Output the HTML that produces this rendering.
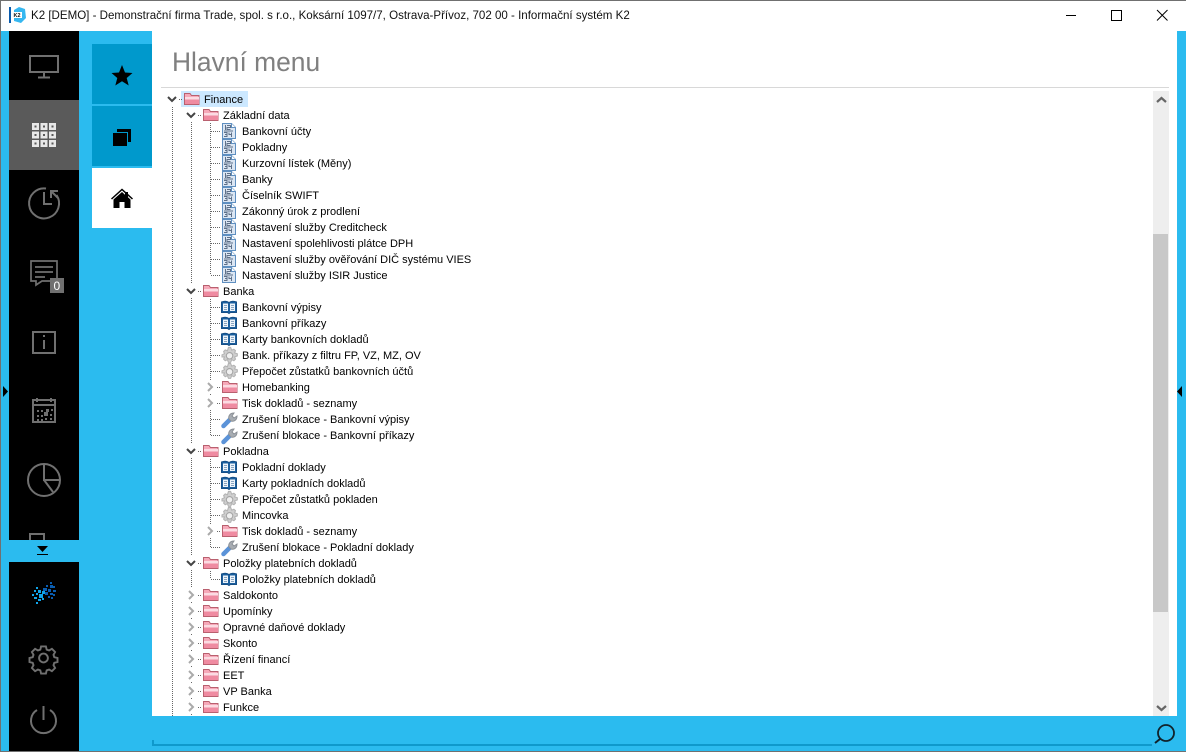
<!DOCTYPE html>
<html lang="cs"><head><meta charset="utf-8"><title>K2</title>
<style>
html,body{margin:0;padding:0;background:#fff}
#w{position:relative;width:1186px;height:752px;overflow:hidden;background:#2bbbef;font-family:"Liberation Sans",sans-serif}
#w>div{position:absolute}
.t{left:0;margin-top:1px;font-size:11px;line-height:16px;height:16px;color:#000;white-space:nowrap}
.a{left:204px}.b{left:223px}.c{left:242px}
svg{position:absolute;left:0;top:0}
</style></head><body><div id="w">
<div style="left:0;top:0;width:1186px;height:31px;background:#fff"></div>
<div style="left:9px;top:31px;width:70px;height:720px;background:#000"></div>
<div style="left:9px;top:100px;width:70px;height:70px;background:#5a5a5a"></div>
<div style="left:9px;top:540px;width:70px;height:22px;background:#2bbbef"></div>
<div style="left:92px;top:44px;width:60px;height:60px;background:#0099cc"></div>
<div style="left:92px;top:106px;width:60px;height:60px;background:#0099cc"></div>
<div style="left:92px;top:168px;width:60px;height:60px;background:#fff"></div>
<div style="left:152px;top:31px;width:1025px;height:685px;background:#fff"></div>
<div style="left:161px;top:87px;width:1008px;height:1px;background:#d8d8d8"></div>
<div style="left:1153px;top:91px;width:16px;height:625px;background:#eee"></div>
<div style="left:1153px;top:234px;width:15px;height:378px;background:#c8c8c8"></div>
<div style="left:181px;top:91px;width:67px;height:16px;background:#cce8ff"></div>
<div style="left:152px;top:744px;width:1000px;height:2px;background:#0f99cc"></div>
<div style="left:152px;top:740px;width:2px;height:6px;background:#0f99cc"></div>

<svg width="1186" height="752" viewBox="0 0 1186 752" fill="none">
<defs>
<g id="f"><path d="M.5 11.500V.5h5.500l1.500 2h7.500v9z" fill="#f6a9b9" stroke="#b9606f"/><path d="M1 4h14v2.500H1z" fill="#fbdbe2"/><path d="M1 6.500h14V11H1z" fill="#ef8ba1"/></g>
<g id="n"><path d="M.5.5h9l4 4v11H.5z" fill="#dbe6f3" stroke="#5f8fc0"/><path d="M9.500.5v4h4" fill="#fff" stroke="#5f8fc0"/><g stroke="#5e7088" shape-rendering="crispEdges"><path d="M3.500 2v5M5 2.500h3.500v2H5v2h3.500M2 8h9M2 9.500h3v2H3M2 13.500h3V11.500M7 9.500v2h3M9.500 9.500v4.500"/></g></g>
<g id="k"><path d="M.5 1C3 0 6 0 8 1.500c2-1.500 5-1.500 7.500-.5v10.500h-6l-1.500 1-1.500-1h-6z" fill="#1b5f9e" stroke="#174f86"/><path d="M2 2.500h5v7.500H2zM9 2.500h5v7.500H9z" fill="#eef4fa"/><path d="M3 4.500h3M3 6.500h3M3 8.500h3M10 4.500h3M10 6.500h3M10 8.500h3" stroke="#88a4c0"/></g>
<g id="g"><g transform="scale(1.080)"><path d="M8-.5l1 2.500 2-.8 1.500 1.300-.8 2 2.500.8v2l-2.500 1 .8 2-1.500 1.500-2-1-1 2.500H6l-1-2.500-2 1-1.500-1.500.8-2L0 8.300v-2l2.300-1-.8-2L3 1.800l2 .8L6-.5z" fill="#cfcfcf" stroke="#b4b4b4"/><circle cx="7" cy="7.200" r="3" fill="#f0f0f0" stroke="#a5a5a5"/></g></g>
<g id="r"><path d="M2.500 14l7-7" stroke="#5b93d8" stroke-width="4.500" stroke-linecap="round"/><path d="M8 7c-1-3 1-6 5-6l-2 3 2 2 3-2c0 4-3 6-6 5z" fill="#a8adb3" stroke="#8b9096"/></g>
<path id="e" d="M0 0l4 4 4-4" stroke="#444" stroke-width="2"/>
<path id="c" d="M0 0l4 4-4 4" stroke="#aaa" stroke-width="2"/>
</defs>

<!-- window frame -->
<path d="M0 .5h1186M.5 0v752M0 751.500h1186" stroke="#707070"/>
<!-- title icon -->
<rect x="9" y="7" width="2" height="16" fill="#0b5cad"/>
<path d="M14 10l5-3 6 2 1 9-5 5-7-2z" fill="#36b7f0"/><rect x="13" y="12" width="9" height="6" fill="#fff"/><text x="13.500" y="17" font-size="5.500" font-weight="bold" fill="#111" font-family="Liberation Sans">K2</text>
<!-- window controls -->
<path d="M1066 15.500h10" stroke="#000"/>
<rect x="1111.500" y="10.500" width="10" height="10" stroke="#000"/>
<path d="M1157 10l10.500 10.500M1167.500 10L1157 20.500" stroke="#000"/>

<!-- sidebar icons -->
<g stroke="#707070" stroke-width="2">
<rect x="30" y="56" width="28" height="16"/><path d="M44 73v4M38 77.500h12"/>
<path d="M46 188.500A15 15 0 1 0 56.500 195M44 192v12h8M51 198v-7h7M51 191l7 7"/>
<path d="M31 261h26v20H42l-6 4v-4h-5zM35 267h18M35 272h18M35 277h10" stroke-width="1.700"/>
<rect x="33" y="332" width="22" height="21"/><path d="M44 340v9M44 335v2"/>
<rect x="33" y="400" width="22" height="22"/><path d="M33 405h22M37 398v4M51 398v4"/>
<circle cx="44" cy="480" r="16"/><path d="M44 464v16h16M44 480l9 12"/>
<path d="M30 540v-6h14v6"/>
<g transform="translate(43.500 658) scale(.8)"><path d="M-3-14h6l1 4 3 1 3.500-2 4 4-2 3.500 1 3 4 1v5l-4 1-1 3 2 3.500-4 4-3.500-2-3 1-1 4h-6l-1-4-3-1-3.500 2-4-4 2-3.500-1-3-4-1v-5l4-1 1-3-2-3.500 4-4 3.500 2 3-1z" transform="translate(0 -.5)" stroke-width="2.400"/><circle r="5.500" stroke-width="2.400"/></g>
<path d="M43.500 706v14M37 710a12.500 12.500 0 1 0 13 0"/>
</g>
<g id="grid" fill="#e8e8e8">
<path fill-rule="evenodd" d="M32 123h7v7h-7zM40.500 123h7v7h-7zM49 123h7v7h-7zM32 131.500h7v7h-7zM40.500 131.500h7v7h-7zM49 131.500h7v7h-7zM32 140h7v7h-7zM40.500 140h7v7h-7zM49 140h7v7h-7zM34.500 125.500v2h2v-2zM43 125.500v2h2v-2zM51.500 125.500v2h2v-2zM34.500 134v2h2v-2zM43 134v2h2v-2zM51.500 134v2h2v-2zM34.500 142.500v2h2v-2zM43 142.500v2h2v-2zM51.500 142.500v2h2v-2z"/>
</g>
<path d="M37 410h2v2h-2zM41 410h2v2h-2zM46 409h3v3h-3zM51 409h2v2h-2zM37 415h2v2h-2zM41 415h2v2h-2zM44 412h4v4h-4zM50 414h2v2h-2zM45 418h2v2h-2zM50 418h2v2h-2zM37 419h2v2h-2zM41 419h2v2h-2z" fill="#707070"/>
<rect x="50" y="278" width="14" height="15" fill="#707070"/>
<text x="53.500" y="290" font-size="12" fill="#fff" font-family="Liberation Sans">0</text>
<path d="M37 546h11l-5.500 6z" fill="#000"/><path d="M37 554.500h11" stroke="#000"/>
<!-- K2 pixels -->
<g fill="#0a5db0"><path d="M50 582h2v2h-2zM46 585h2v2h-2zM50 585h3v3h-3zM53 586h2v2h-2zM43 588h4v3h-4zM48 589h3v3h-3zM53 590h3v2h-3zM45 592h3v3h-3zM50 593h3v2h-3zM53 594h2v2h-2zM48 596h2v2h-2zM51 597h2v2h-2z"/></g>
<g fill="#10a5ea"><path d="M36 587h2v2h-2zM34 590h2v2h-2zM38 590h3v3h-3zM42 591h3v3h-3zM32 594h2v2h-2zM36 593h2v2h-2zM39 594h4v4h-4zM34 597h3v2h-3zM38 599h3v2h-3zM42 598h2v2h-2zM36 602h2v2h-2z"/></g>
<!-- side arrows -->
<path d="M3 386l5 5.500-5 5.500z" fill="#000"/><path d="M1182 386l-5 5.500 5 5.500z" fill="#000"/>
<!-- tab icons -->
<path d="M122 65l3 7.500 7.500.5-5.800 5 2 7.500-6.700-4.300-6.700 4.300 2-7.500-5.800-5 7.500-.5z" fill="#000"/>
<path d="M113 133h14v13h-14z" fill="#000"/><path d="M117 129h14v13h-3v-10h-11z" fill="#000"/>
<path d="M122 192l-8.500 7.500V208h6v-6h5v6h6v-8.500l-2.500-2.200V192h-3v2.700z" fill="#000"/><path d="M111.500 199l10.500-9.500 10.500 9.500" stroke="#000" stroke-width="1.500"/>
<!-- search -->
<circle cx="1166" cy="733" r="8" stroke="#11232b" stroke-width="1.800"/><path d="M1160 739l-5 4" stroke="#11232b" stroke-width="2"/>
<!-- scroll arrows -->
<path d="M1157 102l4.500-4 4.500 4" stroke="#666" stroke-width="2.200"/>
<path d="M1157 706l4.500 4 4.500-4" stroke="#666" stroke-width="2.200"/>

<!-- dotted lines -->
<g stroke="#666" stroke-dasharray="1 1" shape-rendering="crispEdges">
<path d="M172.500 107V716M191.500 122V284M191.500 298V444M191.500 458V556M191.500 570V588M191.500 602V604M191.500 618V620M191.500 634V636M191.500 650V652M191.500 666V668M191.500 682V684M191.500 698V700M191.500 714V716"/>
<path d="M210.500 123V275M210.500 299V380M210.500 394V396M210.500 410V435M210.500 459V524M210.500 538V547M210.500 571V579"/>
<path d="M179 99.500h4M198 115.500h4M198 291.500h4M198 451.500h4M198 563.500h4M198 595.500h4M198 611.500h4M198 627.500h4M198 643.500h4M198 659.500h4M198 675.500h4M198 691.500h4M198 707.500h4"/>
<path d="M211 131.500h10M211 147.500h10M211 163.500h10M211 179.500h10M211 195.500h10M211 211.500h10M211 227.500h10M211 243.500h10M211 259.500h10M211 275.500h10M211 307.500h10M211 323.500h10M211 339.500h10M211 355.500h10M211 371.500h10M217 387.500h4M217 403.500h4M211 419.500h10M211 435.500h10M211 467.500h10M211 483.500h10M211 499.500h10M211 515.500h10M217 531.500h4M211 547.500h10M211 579.500h10"/>
</g>
<!-- chevrons -->
<use href="#e" x="168" y="97"/><use href="#e" x="187" y="113"/><use href="#e" x="187" y="289"/><use href="#e" x="187" y="449"/><use href="#e" x="187" y="561"/>
<use href="#c" x="189" y="591"/><use href="#c" x="189" y="607"/><use href="#c" x="189" y="623"/><use href="#c" x="189" y="639"/><use href="#c" x="189" y="655"/><use href="#c" x="189" y="671"/><use href="#c" x="189" y="687"/><use href="#c" x="189" y="703"/>
<use href="#c" x="208" y="383"/><use href="#c" x="208" y="399"/><use href="#c" x="208" y="527"/>
<!-- folders -->
<use href="#f" x="184" y="93"/><use href="#f" x="203" y="109"/><use href="#f" x="203" y="285"/><use href="#f" x="203" y="445"/><use href="#f" x="203" y="557"/><use href="#f" x="203" y="589"/><use href="#f" x="203" y="605"/><use href="#f" x="203" y="621"/><use href="#f" x="203" y="637"/><use href="#f" x="203" y="653"/><use href="#f" x="203" y="669"/><use href="#f" x="203" y="685"/><use href="#f" x="203" y="701"/><use href="#f" x="222" y="381"/><use href="#f" x="222" y="397"/><use href="#f" x="222" y="525"/>
<!-- number pages -->
<use href="#n" x="222" y="123"/><use href="#n" x="222" y="139"/><use href="#n" x="222" y="155"/><use href="#n" x="222" y="171"/><use href="#n" x="222" y="187"/><use href="#n" x="222" y="203"/><use href="#n" x="222" y="219"/><use href="#n" x="222" y="235"/><use href="#n" x="222" y="251"/><use href="#n" x="222" y="267"/>
<!-- books -->
<use href="#k" x="221" y="301"/><use href="#k" x="221" y="317"/><use href="#k" x="221" y="333"/><use href="#k" x="221" y="461"/><use href="#k" x="221" y="477"/><use href="#k" x="221" y="573"/>
<!-- gears -->
<use href="#g" x="222" y="348"/><use href="#g" x="222" y="364"/><use href="#g" x="222" y="492"/><use href="#g" x="222" y="508"/>
<!-- wrenches -->
<use href="#r" x="221" y="412"/><use href="#r" x="221" y="428"/><use href="#r" x="221" y="540"/>
</svg>

<div style="left:31px;top:8px;font-size:11.56px;line-height:16px;color:#111;white-space:nowrap">K2 [DEMO] - Demonstrační firma Trade, spol. s r.o., Koksární 1097/7, Ostrava-Přívoz, 702 00 - Informační systém K2</div>
<div style="left:172px;top:46px;font-size:26.4px;line-height:32px;color:#808080;white-space:nowrap">Hlavní menu</div>

<div class="t a" style="top:91px">Finance</div>
<div class="t b" style="top:107px">Základní data</div>
<div class="t c" style="top:123px">Bankovní účty</div>
<div class="t c" style="top:139px">Pokladny</div>
<div class="t c" style="top:155px">Kurzovní lístek (Měny)</div>
<div class="t c" style="top:171px">Banky</div>
<div class="t c" style="top:187px">Číselník SWIFT</div>
<div class="t c" style="top:203px">Zákonný úrok z prodlení</div>
<div class="t c" style="top:219px">Nastavení služby Creditcheck</div>
<div class="t c" style="top:235px">Nastavení spolehlivosti plátce DPH</div>
<div class="t c" style="top:251px">Nastavení služby ověřování DIČ systému VIES</div>
<div class="t c" style="top:267px">Nastavení služby ISIR Justice</div>
<div class="t b" style="top:283px">Banka</div>
<div class="t c" style="top:299px">Bankovní výpisy</div>
<div class="t c" style="top:315px">Bankovní příkazy</div>
<div class="t c" style="top:331px">Karty bankovních dokladů</div>
<div class="t c" style="top:347px">Bank. příkazy z filtru FP, VZ, MZ, OV</div>
<div class="t c" style="top:363px">Přepočet zůstatků bankovních účtů</div>
<div class="t c" style="top:379px">Homebanking</div>
<div class="t c" style="top:395px">Tisk dokladů - seznamy</div>
<div class="t c" style="top:411px">Zrušení blokace - Bankovní výpisy</div>
<div class="t c" style="top:427px">Zrušení blokace - Bankovní příkazy</div>
<div class="t b" style="top:443px">Pokladna</div>
<div class="t c" style="top:459px">Pokladní doklady</div>
<div class="t c" style="top:475px">Karty pokladních dokladů</div>
<div class="t c" style="top:491px">Přepočet zůstatků pokladen</div>
<div class="t c" style="top:507px">Mincovka</div>
<div class="t c" style="top:523px">Tisk dokladů - seznamy</div>
<div class="t c" style="top:539px">Zrušení blokace - Pokladní doklady</div>
<div class="t b" style="top:555px">Položky platebních dokladů</div>
<div class="t c" style="top:571px">Položky platebních dokladů</div>
<div class="t b" style="top:587px">Saldokonto</div>
<div class="t b" style="top:603px">Upomínky</div>
<div class="t b" style="top:619px">Opravné daňové doklady</div>
<div class="t b" style="top:635px">Skonto</div>
<div class="t b" style="top:651px">Řízení financí</div>
<div class="t b" style="top:667px">EET</div>
<div class="t b" style="top:683px">VP Banka</div>
<div class="t b" style="top:699px">Funkce</div>
</div></body></html>
